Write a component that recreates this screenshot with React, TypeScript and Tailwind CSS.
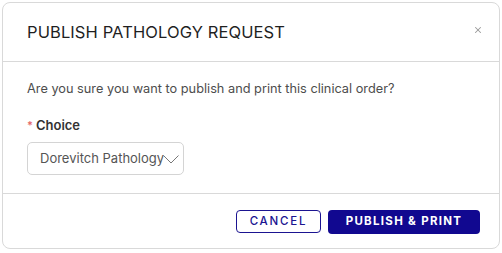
import { X } from 'lucide-react';

export default function App() {
    return (
        <div className="w-[502px] h-[253px] bg-white pl-[2px] pt-[2px] font-['Inter',sans-serif]">
            <div className="w-[498px] h-[247px] border border-[#d9d9d9] rounded-lg flex flex-col bg-white">
                {/* Header */}
                <div className="h-[59px] shrink-0 border-b border-[#d9d9d9] flex items-center justify-between pl-6 pr-[16px]">
                    <h2 className="text-[16.5px] text-[#1f1f1f] font-normal tracking-[0.1px]">PUBLISH PATHOLOGY REQUEST</h2>
                    <X className="text-[#9a9a9a] mb-[4px]" size={10} strokeWidth={2.5} />
                </div>

                {/* Body */}
                <div className="flex-1 px-6 pt-[19px]">
                    <p className="text-[12.75px] text-[#4d4d4d] leading-4">
                        Are you sure you want to publish and print this clinical order?
                    </p>
                    <div className="mt-[20px] text-[13px] font-semibold text-[#333] leading-4">
                        <span className="text-[#e56b6b] text-[11px] mr-[3px] align-top">*</span>Choice
                    </div>
                    <div className="mt-[9px] w-[157px] h-[33px] border border-[#d4d4d4] rounded-[5px] flex items-center pl-3 text-[13px] text-[#555] overflow-hidden whitespace-nowrap">
                        <span>Dorevitch Pathology</span>
                        <svg width="16" height="9" viewBox="0 0 16 9" className="shrink-0 -ml-[1px] mt-[1px]">
                            <path d="M0.5 0.5 L8 8 L15.5 0.5" fill="none" stroke="#777" strokeWidth="1" />
                        </svg>
                    </div>
                </div>

                {/* Footer */}
                <div className="h-[55px] shrink-0 border-t border-[#d9d9d9] flex items-start justify-end gap-[7px] pt-[16px] pr-[19px]">
                    <button className="w-[85px] h-[23px] border border-[#1b1491] rounded-[4px] text-[#1b1491] text-[11.5px] font-medium tracking-[1.8px] flex items-center justify-center">
                        CANCEL
                    </button>
                    <button className="w-[152px] h-[24px] bg-[#110890] rounded-[4px] text-white text-[11.5px] font-bold tracking-[1.3px] flex items-center justify-center">
                        PUBLISH &amp; PRINT
                    </button>
                </div>
            </div>
        </div>
    );
}
